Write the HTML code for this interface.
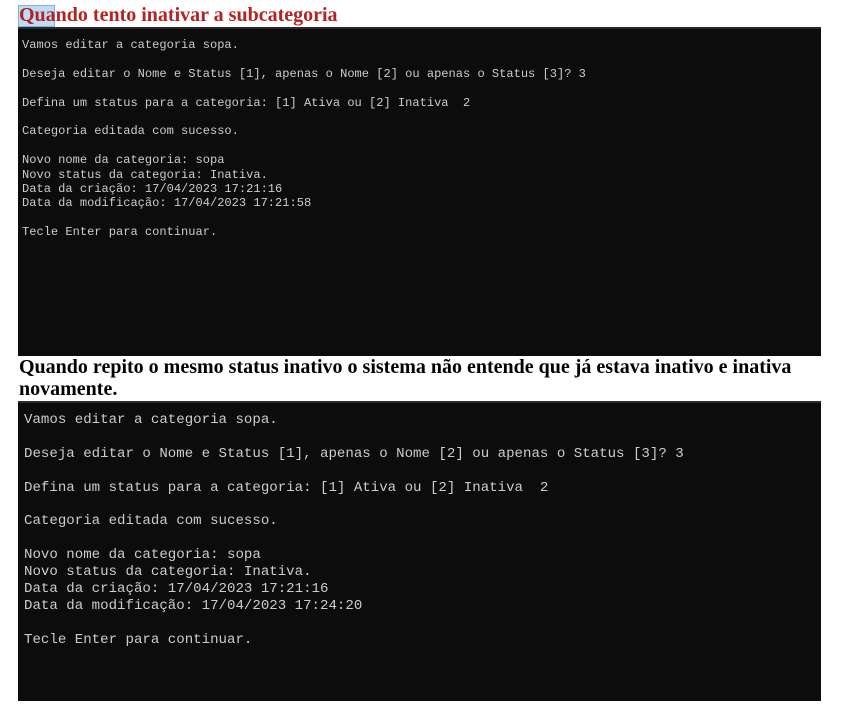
<!DOCTYPE html>
<html><head><meta charset="utf-8"><style>
html,body{margin:0;padding:0;background:#fff;width:860px;height:722px;overflow:hidden}
.h{position:absolute;left:19px;font-family:"Liberation Serif",serif;font-weight:bold;font-size:20px;line-height:22px}
.hl{position:absolute;left:18px;top:5px;width:37px;height:22px;background:#bfdcf5;border:1px solid #7fb2e0;box-sizing:border-box}
.t{position:absolute;left:18px;width:803px;background:#0c0c0c;border-top:2px solid #2a2a2a;box-sizing:border-box;color:#cccccc;font-family:"Liberation Mono",monospace;white-space:pre;margin:0}
</style></head><body>
<div class="hl"></div>
<div class="h" style="top:4px;color:#b52222">Quando tento inativar a subcategoria</div>
<pre class="t" style="top:27px;height:329px;font-size:12.05px;line-height:14.4px;padding:9px 0 0 4px">Vamos editar a categoria sopa.

Deseja editar o Nome e Status [1], apenas o Nome [2] ou apenas o Status [3]? 3

Defina um status para a categoria: [1] Ativa ou [2] Inativa  2

Categoria editada com sucesso.

Novo nome da categoria: sopa
Novo status da categoria: Inativa.
Data da criação: 17/04/2023 17:21:16
Data da modificação: 17/04/2023 17:21:58

Tecle Enter para continuar.</pre>
<div class="h" style="top:356px;color:#000;width:800px">Quando repito o mesmo status inativo o sistema não entende que já estava inativo e inativa novamente.</div>
<pre class="t" style="top:401px;height:300px;font-size:14.1px;line-height:16.9px;padding:9px 0 0 6px">Vamos editar a categoria sopa.

Deseja editar o Nome e Status [1], apenas o Nome [2] ou apenas o Status [3]? 3

Defina um status para a categoria: [1] Ativa ou [2] Inativa  2

Categoria editada com sucesso.

Novo nome da categoria: sopa
Novo status da categoria: Inativa.
Data da criação: 17/04/2023 17:21:16
Data da modificação: 17/04/2023 17:24:20

Tecle Enter para continuar.</pre>
</body></html>
